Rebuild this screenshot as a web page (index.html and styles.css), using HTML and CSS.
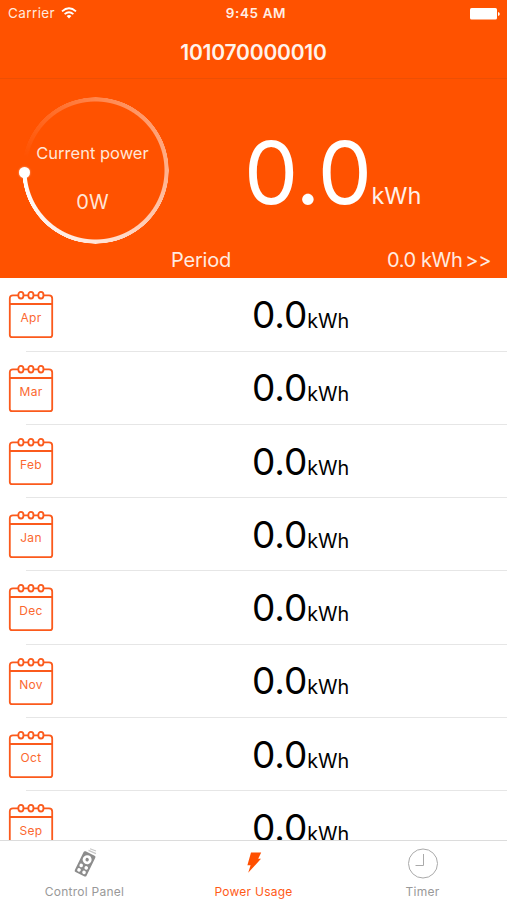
FILE: index.html
```html
<!DOCTYPE html>
<html lang="en">
<head>
<meta charset="utf-8">
<title>Power Usage</title>
<link rel="stylesheet" href="styles.css">
</head>
<body>
<svg class="defs" width="0" height="0">
  <symbol id="calendar" viewBox="0 0 46 50">
    <g fill="none" stroke="#fb5a1c" stroke-width="1.8">
      <path d="M10.2 5.3H5Q1.8 5.3 1.8 8.5V45Q1.8 47.2 4 47.2H42Q44.2 47.2 44.2 45V8.5Q44.2 5.3 41 5.3H35.6M15.6 5.3h4.6M25.6 5.3h4.6M1.8 14H44.2"/>
      <ellipse cx="12.9" cy="5.2" rx="2.6" ry="3.3"/>
      <ellipse cx="22.9" cy="5.2" rx="2.6" ry="3.3"/>
      <ellipse cx="32.9" cy="5.2" rx="2.6" ry="3.3"/>
    </g>
  </symbol>
</svg>
<div class="screen">
  <header class="top">
    <div class="status">
      <div class="carrier"><span>Carrier</span>
        <svg class="wifi" viewBox="0 0 16 12" width="16" height="12"><g fill="none" stroke="#fff" stroke-width="1.8"><path d="M1 4.4Q8-1.8 15 4.4"/><path d="M3.6 7.2Q8 3.3 12.4 7.2"/></g><path d="M5.6 9Q8 7 10.4 9L8 11.5Z" fill="#fff"/></svg>
      </div>
      <span class="clock">9:45 AM</span>
      <svg class="battery" viewBox="0 0 30 12" width="30" height="12"><rect width="27" height="11.6" rx="1.6" fill="#fff"/><path d="M28 4.1q1.8.3 1.8 1.9T28 7.9Z" fill="#fff"/></svg>
    </div>
    <h1 class="title">101070000010</h1>
  </header>
  <section class="summary">
    <div class="gauge">
      <div class="ring"></div>
      <div class="knob"></div>
      <span class="gauge-label">Current power</span>
      <span class="gauge-value">0W</span>
    </div>
    <div class="total"><span class="total-number">0.0</span><span class="total-unit">kWh</span></div>
    <div class="period"><span class="period-label">Period</span><span class="period-value">0.0 kWh</span><span class="more">&gt;&gt;</span></div>
  </section>
  <main class="list">
    <div class="row"><div class="month"><svg><use href="#calendar"/></svg><span>Apr</span></div><div class="usage"><span class="num">0.0</span><span class="unit">kWh</span></div></div>
    <div class="row"><div class="month"><svg><use href="#calendar"/></svg><span>Mar</span></div><div class="usage"><span class="num">0.0</span><span class="unit">kWh</span></div></div>
    <div class="row"><div class="month"><svg><use href="#calendar"/></svg><span>Feb</span></div><div class="usage"><span class="num">0.0</span><span class="unit">kWh</span></div></div>
    <div class="row"><div class="month"><svg><use href="#calendar"/></svg><span>Jan</span></div><div class="usage"><span class="num">0.0</span><span class="unit">kWh</span></div></div>
    <div class="row"><div class="month"><svg><use href="#calendar"/></svg><span>Dec</span></div><div class="usage"><span class="num">0.0</span><span class="unit">kWh</span></div></div>
    <div class="row"><div class="month"><svg><use href="#calendar"/></svg><span>Nov</span></div><div class="usage"><span class="num">0.0</span><span class="unit">kWh</span></div></div>
    <div class="row"><div class="month"><svg><use href="#calendar"/></svg><span>Oct</span></div><div class="usage"><span class="num">0.0</span><span class="unit">kWh</span></div></div>
    <div class="row"><div class="month"><svg><use href="#calendar"/></svg><span>Sep</span></div><div class="usage"><span class="num">0.0</span><span class="unit">kWh</span></div></div>
  </main>
  <nav class="tabs">
    <div class="tab">
      <svg viewBox="0 0 34 38" width="34" height="38">
        <g transform="rotate(26 17.2 22.6)">
          <rect x="10.7" y="11.4" width="13" height="23" rx="1.5" fill="#8c8c8c"/>
          <circle cx="17.2" cy="18.2" r="4.5" fill="#fff"/><circle cx="17.2" cy="18.2" r="1.7" fill="#8c8c8c"/>
          <g fill="#fff"><circle cx="14.4" cy="26" r="1.8"/><circle cx="20" cy="26" r="1.8"/><circle cx="14.4" cy="31" r="1.8"/><circle cx="20" cy="31" r="1.8"/></g>
        </g>
        <path d="M20.5 9.4l7.5 3.2M22 7.8l6 2.2" stroke="#c8c8c8" stroke-width="1.2" fill="none"/>
      </svg>
      <span>Control Panel</span>
    </div>
    <div class="tab active">
      <svg viewBox="0 0 34 38" width="34" height="38"><path d="M14 11.6H24.2L21.2 17.8H24L11.2 31.8L13.6 24.2H10.4Z" fill="#ff4f00"/></svg>
      <span>Power Usage</span>
    </div>
    <div class="tab">
      <svg viewBox="0 0 34 38" width="34" height="38"><g fill="none" stroke="#aaa" stroke-width="1"><circle cx="17" cy="22.5" r="14.5"/><path d="M17.5 13V24.5H9.5"/></g></svg>
      <span>Timer</span>
    </div>
  </nav>
</div>
</body>
</html>
```
FILE: styles.css
```css
* { box-sizing: border-box; }
body { margin: 0; font-family: Inter, "Liberation Sans", sans-serif; background: #fff; }
.defs { display: block; }
.screen { height: 900px; width: 507px; display: flex; flex-direction: column; overflow: hidden; }
.top { height: 79px; background: #ff5200; color: #fff; border-bottom: 1px solid #ed4f05; flex: none; }
.status { height: 27px; padding: 0 7px 0 8px; display: grid; grid-template-columns: 1fr auto 1fr; align-items: center; font-size: 13.5px; line-height: 27px; }
.carrier { display: flex; align-items: center; gap: 6px; color: #ffe9dd; letter-spacing: .4px; }
.wifi { margin-top: -2px; }
.clock { position: relative; left: 2px; font-weight: 600; font-size: 13.5px; letter-spacing: .6px; color: #ffeee5; }
.battery { justify-self: end; }
.title { margin: 0; text-align: center; font-size: 21px; line-height: 25px; padding-top: 13px; font-weight: 600; color: #fff3ec; letter-spacing: -.2px; }
.summary { height: 199px; flex: none; background: #ff5200; color: #fff; display: grid; grid-template-columns: 244px 1fr; grid-template-rows: 165px 34px; }
.gauge { position: relative; width: 147px; height: 147px; margin: 18px 0 0 22px; display: flex; flex-direction: column; align-items: center; color: #ffe6d8; }
.ring { position: absolute; inset: 0; border-radius: 50%; background: conic-gradient(from 270deg, rgba(255,255,255,0) 3%, rgba(255,255,255,.3) 25%, rgba(255,255,255,.55) 50%, rgba(255,255,255,.85) 75%, #fff 100%); -webkit-mask: radial-gradient(circle, transparent 68.5px, #000 69.5px, #000 73px, transparent 73.5px); mask: radial-gradient(circle, transparent 68.5px, #000 69.5px, #000 73px, transparent 73.5px); }
.knob { position: absolute; left: -3px; top: 70px; width: 11px; height: 11px; border-radius: 50%; background: #fff; box-shadow: 0 0 2px rgba(255,255,255,.6); }
.gauge-label { margin-top: 45px; font-size: 16.5px; line-height: 22px; white-space: nowrap; position: relative; left: -3px; }
.gauge-value { font-size: 20px; line-height: 24px; margin-top: 26px; position: relative; left: -3px; }
.total { display: flex; align-items: baseline; padding-top: 42px; line-height: 104px; }
.total-number { font-size: 86px; letter-spacing: -.5px; }
.total-unit { font-size: 23.5px; color: #fff0e8; }
.period { grid-column: 1 / -1; display: grid; grid-template-columns: 171px 216px auto 1fr; font-size: 20px; line-height: 32px; color: #ffebe0; }
.period-label { grid-column: 2; letter-spacing: -.2px; }
.period-value { letter-spacing: -.4px; }
.more { margin-left: 3px; letter-spacing: -.3px; }
.list { flex: 1; overflow: hidden; min-height: 0; }
.row { height: 73.3px; display: grid; grid-template-columns: 252px 1fr; background: linear-gradient(#e6e6e6, #e6e6e6) 26px 100% / 100% 1px no-repeat; }
.list .row:first-child { height: 73.6px; }
.month { position: relative; width: 46px; height: 50px; margin: 12px 0 0 8px; text-align: center; }
.month svg { position: absolute; left: 0; top: 0; width: 46px; height: 50px; }
.month span { position: relative; display: block; padding-top: 20px; font-size: 12px; line-height: 16px; color: #fb6830; letter-spacing: .3px; }
.usage { display: flex; align-items: baseline; line-height: 46px; padding-top: 13.7px; color: #000; }
.num { font-size: 37px; letter-spacing: -.1px; }
.unit { font-size: 19.8px; }
.tabs { height: 60px; flex: none; border-top: 1px solid #dcdcdc; background: #fff; display: grid; grid-template-columns: 1fr 1fr 1fr; position: relative; }
.tab { display: flex; flex-direction: column; align-items: center; color: #999; font-size: 12px; line-height: 14px; letter-spacing: .25px; }
.tab span { margin-top: 6px; }
.active { color: #ff5a17; }
```
